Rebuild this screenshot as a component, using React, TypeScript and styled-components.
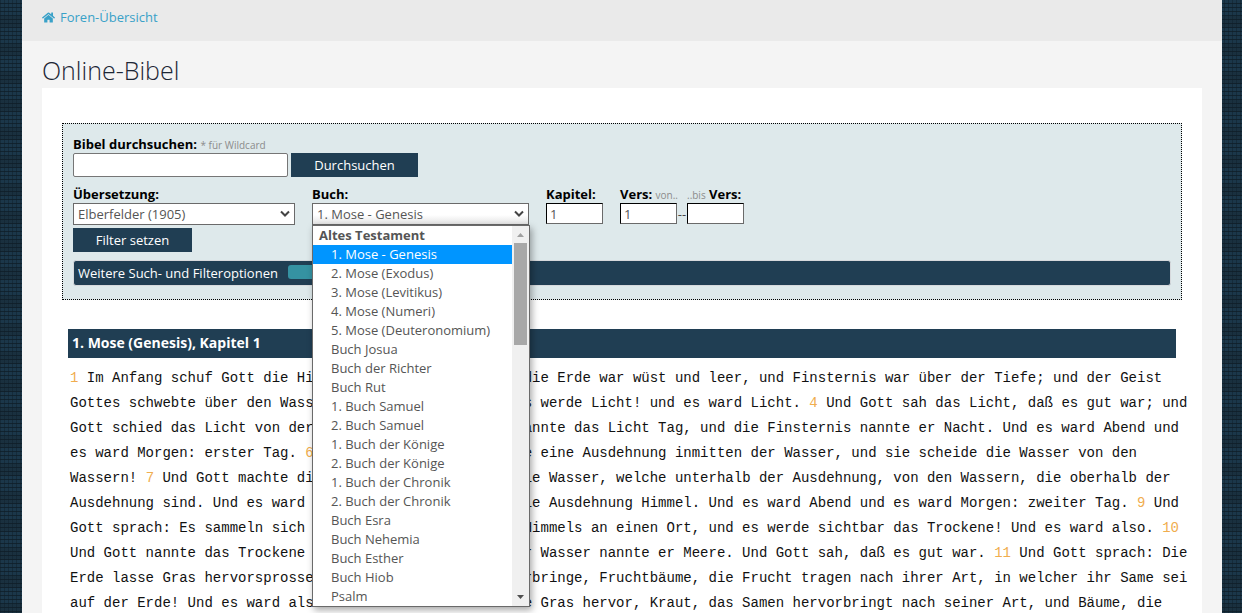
import React from "react";
import styled, { createGlobalStyle } from "styled-components";
import { FaHome } from "react-icons/fa";

const navy = "#203e53";

const GlobalStyle = createGlobalStyle`
  *, *::before, *::after { box-sizing: border-box; }
  html { scrollbar-width: none; }
  body {
    margin: 0;
    font-family: "Open Sans", "Noto Sans", sans-serif;
    font-size: 13px;
    color: #000;
    background-color: #1b374a;
    background-image:
      repeating-linear-gradient(0deg, rgba(14, 28, 38, 0.75) 0 1px, transparent 1px 4px),
      repeating-linear-gradient(90deg, rgba(18, 36, 48, 0.6) 0 1px, transparent 1px 4px),
      repeating-linear-gradient(0deg, rgba(24, 40, 50, 0.45) 0 12px, transparent 12px 28px);
  }
  button, input, select { font: inherit; }
`;

const Page = styled.div`
  margin: 0 20px 0 22px;
  min-height: 100vh;
  background: #f4f4f4;
`;

const Crumbs = styled.nav`
  height: 41px;
  padding: 8px 20px;
  background: #eaeaea;
  line-height: 18px;
`;

const CrumbLink = styled.a`
  display: inline-flex;
  align-items: center;
  gap: 5px;
  color: #39a1c8;
  text-decoration: none;
`;

const Title = styled.h1`
  margin: 0;
  padding: 11px 20px 0;
  height: 47px;
  font-size: 25px;
  font-weight: 350;
  line-height: 36px;
  color: #1c2635;
`;

const Panel = styled.main`
  margin: 0 20px;
  padding: 35px 20px 0;
  background: #fff;
`;

const FilterForm = styled.form`
  border: 1px dotted #000;
  background: #dee9eb;
  padding: 11px 10px 13px;
`;

const Label = styled.label`
  display: block;
  height: 18px;
  line-height: 18px;
  font-weight: 700;
  white-space: nowrap;
`;

const Hint = styled.small`
  font-size: 10px;
  font-weight: 400;
  color: #8c8c8c;
`;

const SearchRow = styled.div`
  display: flex;
  gap: 3px;
`;

const SearchInput = styled.input`
  width: 215px;
  height: 24px;
  border: 1px solid #767676;
  border-radius: 2px;
  background: #fff;
  padding: 0 4px;
`;

const Button = styled.button<{ $width: number }>`
  width: ${(p) => p.$width}px;
  height: 24px;
  padding: 0;
  border: 0;
  background: ${navy};
  color: #fff;
  line-height: 24px;
`;

const FieldRow = styled.div`
  display: flex;
  align-items: flex-start;
  gap: 17px;
  padding: 8px 0 3px;
`;

const Field = styled.div`
  position: relative;
`;

const NumberField = styled.div`
  width: 57px;
`;

const SelectBox = styled.div<{ $width: number }>`
  display: grid;
  width: ${(p) => p.$width}px;
  height: 22px;
  > * { grid-area: 1 / 1; }
  > svg { place-self: center end; margin-right: 4px; pointer-events: none; }
`;

const Select = styled.select<{ $open?: boolean }>`
  appearance: none;
  width: 100%;
  height: 22px;
  padding: 0 20px 0 4px;
  border: 1px solid #6a6a6a;
  border-radius: 0;
  background: ${(p) => (p.$open ? "linear-gradient(#fff 55%, #e4e4e4)" : "#fff")};
  color: #555;
  line-height: 20px;
`;

const NumberInput = styled.input`
  display: block;
  width: 57px;
  height: 21px;
  padding: 0 3px;
  border: 1px solid;
  border-color: #000 #6a6a6a #6a6a6a #000;
  background: #fff;
  color: #555;
`;

const VerseRange = styled.div`
  display: flex;
  align-items: flex-end;
`;

const Dash = styled.span`
  width: 10px;
  line-height: 20px;
  color: #444;
  text-align: center;
`;

const Popup = styled.div`
  position: absolute;
  z-index: 2;
  top: 40px;
  left: 0;
  width: 218px;
  display: flex;
  border: 1px solid #6a6a6a;
  background: #fff;
  box-shadow: 2px 3px 7px rgba(0, 0, 0, 0.35);
`;

const BookList = styled.ul`
  flex: 1;
  margin: 0;
  padding: 0;
  list-style: none;
  color: #555;
  line-height: 19px;
`;

const GroupName = styled.li`
  padding-left: 6px;
  font-weight: 700;
`;

const Book = styled.li<{ $active: boolean }>`
  padding-left: 18px;
  background: ${(p) => (p.$active ? "#0095ff" : "transparent")};
  color: ${(p) => (p.$active ? "#fff" : "inherit")};
`;

const ScrollTrack = styled.div`
  width: 17px;
  display: flex;
  flex-direction: column;
  align-items: center;
  background: #f0f0f0;
`;

const Arrow = styled.svg`
  display: block;
  width: 17px;
  height: 17px;
`;

const Thumb = styled.div`
  width: 13px;
  height: 102px;
  margin-bottom: auto;
  background: #a8a8a8;
`;

const MoreBar = styled.div`
  display: flex;
  align-items: center;
  gap: 10px;
  height: 26px;
  margin-top: 8px;
  padding: 0 4px;
  border: 1px solid #d6d9dc;
  border-radius: 3px;
  background: ${navy};
  color: #fff;
`;

const MoreToggle = styled.button`
  width: 60px;
  height: 14px;
  padding: 0;
  margin-bottom: 2px;
  border: 0;
  border-radius: 3px;
  background: #3592a2;
`;

const Chapter = styled.section`
  padding: 29px 6px 0;
`;

const ChapterTitle = styled.h2`
  margin: 0 0 8px;
  padding: 0 4px;
  height: 29px;
  background: ${navy};
  color: #fff;
  font-size: 14px;
  font-weight: 700;
  line-height: 28px;
`;

const Verses = styled.p`
  margin: 0;
  padding-left: 2px;
  font-family: Consolas, "Liberation Mono", monospace;
  font-size: 14px;
  line-height: 25px;
  color: #111;
`;

const Line = styled.span`
  display: block;
  white-space: nowrap;
`;

const VerseNo = styled.span`
  color: #f0ad4e;
`;

const books = [
  "1. Mose - Genesis", "2. Mose (Exodus)", "3. Mose (Levitikus)", "4. Mose (Numeri)",
  "5. Mose (Deuteronomium)", "Buch Josua", "Buch der Richter", "Buch Rut",
  "1. Buch Samuel", "2. Buch Samuel", "1. Buch der Könige", "2. Buch der Könige",
  "1. Buch der Chronik", "2. Buch der Chronik", "Buch Esra", "Buch Nehemia",
  "Buch Esther", "Buch Hiob", "Psalm",
];

const lines = [
  "1 Im Anfang schuf Gott die Himmel und die Erde. 2 Und die Erde war wüst und leer, und Finsternis war über der Tiefe; und der Geist",
  "Gottes schwebte über den Wassern. 3 Und Gott sprach: Es werde Licht! und es ward Licht. 4 Und Gott sah das Licht, daß es gut war; und",
  "Gott schied das Licht von der Finsternis. 5 Und Gott nannte das Licht Tag, und die Finsternis nannte er Nacht. Und es ward Abend und",
  "es ward Morgen: erster Tag. 6 Und Gott sprach: Es werde eine Ausdehnung inmitten der Wasser, und sie scheide die Wasser von den",
  "Wassern! 7 Und Gott machte die Ausdehnung und schied die Wasser, welche unterhalb der Ausdehnung, von den Wassern, die oberhalb der",
  "Ausdehnung sind. Und es ward also. 8 Und Gott nannte die Ausdehnung Himmel. Und es ward Abend und es ward Morgen: zweiter Tag. 9 Und",
  "Gott sprach: Es sammeln sich die Wasser unterhalb des Himmels an einen Ort, und es werde sichtbar das Trockene! Und es ward also. 10",
  "Und Gott nannte das Trockene Erde, und die Sammlung der Wasser nannte er Meere. Und Gott sah, daß es gut war. 11 Und Gott sprach: Die",
  "Erde lasse Gras hervorsprossen, Kraut, das Samen hervorbringe, Fruchtbäume, die Frucht tragen nach ihrer Art, in welcher ihr Same sei",
  "auf der Erde! Und es ward also. 12 Und die Erde brachte Gras hervor, Kraut, das Samen hervorbringt nach seiner Art, und Bäume, die",
];

const Chevron = () => (
  <svg width="12" height="8" viewBox="0 0 12 8" fill="none" stroke="#444" strokeWidth="2" aria-hidden="true">
    <path d="M2 1.5 6 5.5 10 1.5" />
  </svg>
);

export default function App() {
  return (
    <>
      <GlobalStyle />
      <Page>
        <Crumbs>
          <CrumbLink href="#"><FaHome size={13} aria-hidden="true" />Foren-Übersicht</CrumbLink>
        </Crumbs>
        <Title>Online-Bibel</Title>
        <Panel>
          <FilterForm onSubmit={(e) => e.preventDefault()}>
            <Label htmlFor="search">Bibel durchsuchen: <Hint>* für Wildcard</Hint></Label>
            <SearchRow>
              <SearchInput id="search" type="text" />
              <Button $width={127} type="submit">Durchsuchen</Button>
            </SearchRow>
            <FieldRow>
              <Field>
                <Label htmlFor="translation">Übersetzung:</Label>
                <SelectBox $width={222}>
                  <Select id="translation"><option>Elberfelder (1905)</option></Select>
                  <Chevron />
                </SelectBox>
              </Field>
              <Field>
                <Label htmlFor="book">Buch:</Label>
                <SelectBox $width={217}>
                  <Select id="book" $open>
                    <optgroup label="Altes Testament">
                      {books.map((b) => <option key={b}>{b}</option>)}
                    </optgroup>
                  </Select>
                  <Chevron />
                </SelectBox>
                <Popup>
                  <BookList>
                    <GroupName>Altes Testament</GroupName>
                    {books.map((b, i) => <Book key={b} $active={i === 0}>{b}</Book>)}
                  </BookList>
                  <ScrollTrack>
                    <Arrow viewBox="0 0 17 17" fill="#a0a0a0"><path d="M5 11 8.5 7 12 11z" /></Arrow>
                    <Thumb />
                    <Arrow viewBox="0 0 17 17" fill="#505050"><path d="M5 6 8.5 10 12 6z" /></Arrow>
                  </ScrollTrack>
                </Popup>
              </Field>
              <NumberField>
                <Label htmlFor="chapter">Kapitel:</Label>
                <NumberInput id="chapter" type="text" defaultValue="1" />
              </NumberField>
              <VerseRange>
                <NumberField>
                  <Label htmlFor="from">Vers: <Hint>von..</Hint></Label>
                  <NumberInput id="from" type="text" defaultValue="1" />
                </NumberField>
                <Dash>--</Dash>
                <NumberField>
                  <Label htmlFor="to"><Hint>..bis</Hint> Vers:</Label>
                  <NumberInput id="to" type="text" />
                </NumberField>
              </VerseRange>
            </FieldRow>
            <Button $width={119} type="submit">Filter setzen</Button>
            <MoreBar>
              Weitere Such- und Filteroptionen
              <MoreToggle type="button" aria-label="Optionen anzeigen" />
            </MoreBar>
          </FilterForm>
          <Chapter>
            <ChapterTitle>1. Mose (Genesis), Kapitel 1</ChapterTitle>
            <Verses>
              {lines.map((line) => (
                <Line key={line}>
                  {line.split(/(\d+)/).map((part, i) => (i % 2 ? <VerseNo key={i}>{part}</VerseNo> : part))}
                </Line>
              ))}
            </Verses>
          </Chapter>
        </Panel>
      </Page>
    </>
  );
}
